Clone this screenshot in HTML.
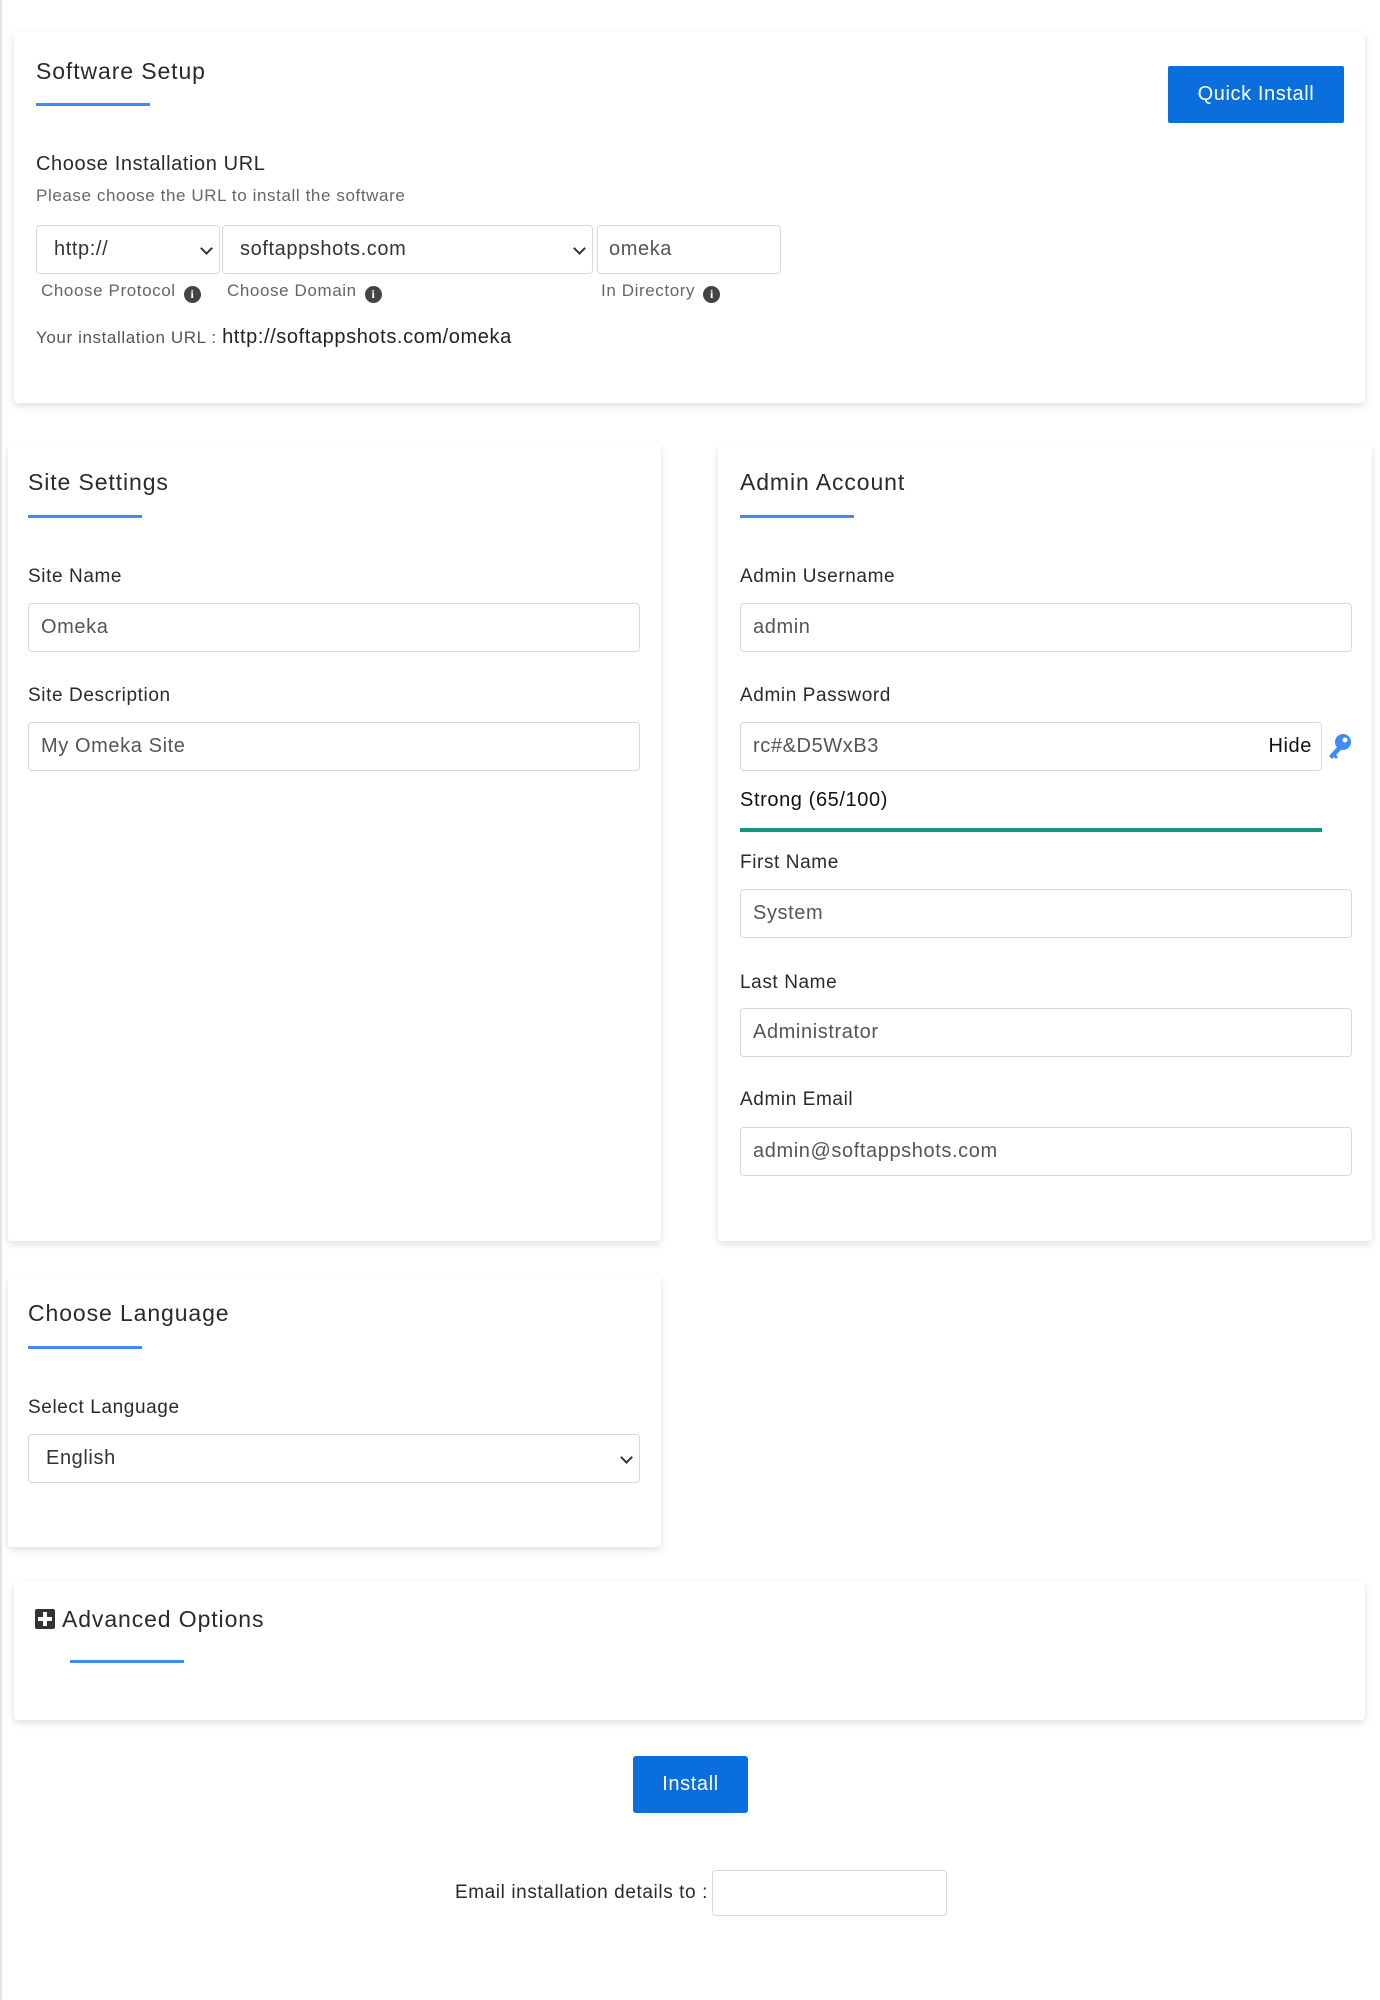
<!DOCTYPE html>
<html><head><meta charset="utf-8">
<style>
*{box-sizing:border-box;margin:0;padding:0}
body{width:1380px;height:2000px;background:#fff;font-family:"Liberation Sans",sans-serif;color:#222;position:relative;overflow:hidden;letter-spacing:0.6px}
body:before{content:"";position:absolute;left:0;top:0;width:2px;height:2000px;background:#e4e4e4}
.a{position:absolute}
.card{position:absolute;background:#fff;border-radius:4px;box-shadow:0 3px 8px rgba(0,0,0,.13)}
.t{position:absolute;font-size:23px;color:#2a2a2a;line-height:28px;letter-spacing:0.9px}
.ul{position:absolute;height:3px;width:114px;background:#3f8cf0}
.lbl{position:absolute;font-size:19px;color:#2a2a2a;line-height:24px}
.in{position:absolute;border:1px solid #d9d9d9;border-radius:4px;height:49px;font-size:20px;color:#555;padding-left:12px;line-height:47px;background:#fff}
.chev{position:absolute;right:8px;top:18px;width:9px;height:9px;border-right:2px solid #333;border-bottom:2px solid #333;transform:rotate(45deg)}
.info{display:inline-block;width:17px;height:17px;border-radius:50%;background:#444;color:#fff;font-size:12px;font-weight:bold;text-align:center;line-height:17px;vertical-align:-2px;margin-left:8px;font-family:"Liberation Serif",serif;letter-spacing:0}
.small{position:absolute;font-size:17px;color:#666;line-height:22px}
.btn{position:absolute;background:#0a6fdc;color:#fff;font-size:20px;text-align:center;border-radius:2px}
</style></head><body>

<div class="card" style="left:14px;top:32px;width:1351px;height:371px"></div>
<div class="t" style="left:36px;top:57px">Software Setup</div>
<div class="ul" style="left:36px;top:103px"></div>
<div class="btn" style="left:1168px;top:66px;width:176px;height:57px;line-height:57px">Quick Install</div>
<div class="lbl" style="left:36px;top:152px;font-size:20px">Choose Installation URL</div>
<div class="small" style="left:36px;top:185px;font-size:17px">Please choose the URL to install the software</div>
<div class="in" style="left:36px;top:225px;width:184px;color:#333;padding-left:17px">http://<span class="chev"></span></div>
<div class="in" style="left:222px;top:225px;width:371px;color:#333;padding-left:17px">softappshots.com<span class="chev"></span></div>
<div class="in" style="left:597px;top:225px;width:184px;padding-left:11px">omeka</div>
<div class="small" style="left:41px;top:280px">Choose Protocol<span class="info">i</span></div>
<div class="small" style="left:227px;top:280px">Choose Domain<span class="info">i</span></div>
<div class="small" style="left:601px;top:280px">In Directory<span class="info">i</span></div>
<div class="a" style="left:36px;top:325px;font-size:17px;color:#555;line-height:24px">Your installation URL : <span style="font-size:20px;color:#222">http://softappshots.com/omeka</span></div>

<div class="card" style="left:8px;top:444px;width:653px;height:797px"></div>
<div class="t" style="left:28px;top:468px">Site Settings</div>
<div class="ul" style="left:28px;top:515px"></div>
<div class="lbl" style="left:28px;top:565px">Site Name</div>
<div class="in" style="left:28px;top:603px;width:612px">Omeka</div>
<div class="lbl" style="left:28px;top:684px">Site Description</div>
<div class="in" style="left:28px;top:722px;width:612px">My Omeka Site</div>

<div class="card" style="left:718px;top:444px;width:654px;height:797px"></div>
<div class="t" style="left:740px;top:468px">Admin Account</div>
<div class="ul" style="left:740px;top:515px"></div>
<div class="lbl" style="left:740px;top:565px">Admin Username</div>
<div class="in" style="left:740px;top:603px;width:612px">admin</div>
<div class="lbl" style="left:740px;top:684px">Admin Password</div>
<div class="in" style="left:740px;top:722px;width:582px">rc#&amp;D5WxB3<span style="position:absolute;right:9px;color:#111">Hide</span></div>
<svg class="a" style="left:1326px;top:733px" width="26" height="28" viewBox="0 0 26 28"><circle cx="17" cy="9" r="8" fill="#3f8cf0"/><circle cx="19" cy="7" r="2.5" fill="#fff"/><path d="M12 13 L3 23 L6 26 L8 24 L10 26 L12 24 L10 22 L15 17 Z" fill="#3f8cf0"/></svg>
<div class="lbl" style="left:740px;top:788px;color:#111;font-size:20px">Strong (65/100)</div>
<div class="a" style="left:740px;top:828px;width:582px;height:4px;background:#14967f"></div>
<div class="lbl" style="left:740px;top:851px">First Name</div>
<div class="in" style="left:740px;top:889px;width:612px">System</div>
<div class="lbl" style="left:740px;top:971px">Last Name</div>
<div class="in" style="left:740px;top:1008px;width:612px">Administrator</div>
<div class="lbl" style="left:740px;top:1088px">Admin Email</div>
<div class="in" style="left:740px;top:1127px;width:612px">admin@softappshots.com</div>

<div class="card" style="left:8px;top:1276px;width:653px;height:271px"></div>
<div class="t" style="left:28px;top:1299px">Choose Language</div>
<div class="ul" style="left:28px;top:1346px"></div>
<div class="lbl" style="left:28px;top:1396px">Select Language</div>
<div class="in" style="left:28px;top:1434px;width:612px;color:#333;padding-left:17px">English<span class="chev"></span></div>

<div class="card" style="left:14px;top:1582px;width:1351px;height:138px"></div>
<div class="a" style="left:35px;top:1609px;width:20px;height:20px;background:#333;border-radius:2px"><div class="a" style="left:8px;top:3px;width:4px;height:14px;background:#fff"></div><div class="a" style="left:3px;top:8px;width:14px;height:4px;background:#fff"></div></div>
<div class="t" style="left:62px;top:1605px">Advanced Options</div>
<div class="ul" style="left:70px;top:1660px"></div>

<div class="btn" style="left:633px;top:1756px;width:115px;height:57px;line-height:57px;border-radius:3px">Install</div>
<div class="lbl" style="left:400px;width:308px;text-align:right;top:1881px;font-size:19px">Email installation details to :</div>
<div class="in" style="left:712px;top:1870px;width:235px;height:46px"></div>
</body></html>
